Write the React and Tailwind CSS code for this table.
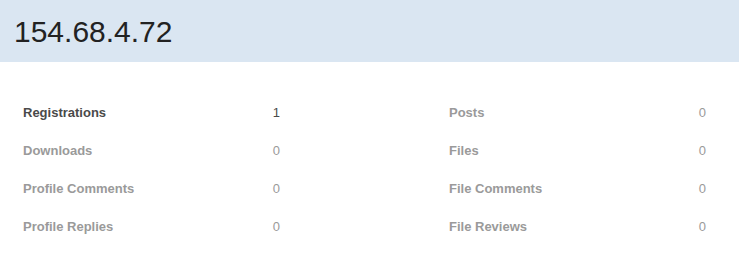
export default function App() {
  const left = [
    ["Registrations", "1", true],
    ["Downloads", "0", false],
    ["Profile Comments", "0", false],
    ["Profile Replies", "0", false],
  ];
  const right = [
    ["Posts", "0", false],
    ["Files", "0", false],
    ["File Comments", "0", false],
    ["File Reviews", "0", false],
  ];
  const Col = ({ rows }) => (
    <div className="flex flex-col">
      {rows.map(([label, val, active]) => (
        <div key={label} className="h-[38px] flex items-center justify-between">
          <span className={`text-[13px] font-bold ${active ? "text-[#4a4a4a]" : "text-[#9a9a9a]"}`}>{label}</span>
          <span className={`text-[13px] ${active ? "text-[#4a4a4a]" : "text-[#9a9a9a]"}`}>{val}</span>
        </div>
      ))}
    </div>
  );
  return (
    <div className="w-[739px] h-[274px] bg-white" style={{ fontFamily: '"Liberation Sans", Arial, sans-serif' }}>
      <div className="h-[62px] bg-[#dae6f2] flex items-center pl-[14px]">
        <h1 className="text-[30px] leading-none text-[#222] pt-[1px]">154.68.4.72</h1>
      </div>
      <div className="pt-[32px] pl-[23px] grid grid-cols-[257px_257px] gap-x-[169px]">
        <Col rows={left} />
        <Col rows={right} />
      </div>
    </div>
  );
}
